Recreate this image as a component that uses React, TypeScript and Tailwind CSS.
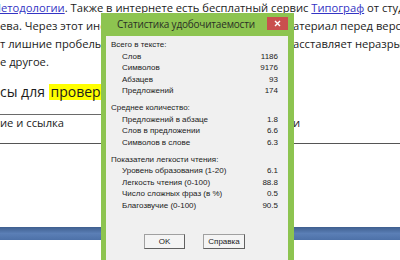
import React from "react";

const rows1 = [
  ["Слов", "1186"],
  ["Символов", "9176"],
  ["Абзацев", "93"],
  ["Предложений", "174"],
];
const rows2 = [
  ["Предложений в абзаце", "1.8"],
  ["Слов в предложении", "6.6"],
  ["Символов в слове", "6.3"],
];
const rows3 = [
  ["Уровень образования (1-20)", "6.1"],
  ["Легкость чтения (0-100)", "88.8"],
  ["Число сложных фраз (в %)", "0.5"],
  ["Благозвучие (0-100)", "90.5"],
];

function Section({ title, rows }: { title: string; rows: string[][] }) {
  return (
    <div className="flex flex-col">
      <div className="h-[11.5px] leading-[11.5px]">{title}</div>
      {rows.map(([k, v]) => (
        <div key={k} className="flex h-[11.5px] leading-[11.5px] pl-[11px]">
          <span className="flex-1">{k}</span>
          <span>{v}</span>
        </div>
      ))}
    </div>
  );
}

function Dialog() {
  return (
    <div className="absolute left-[101px] top-[13px] w-[193px] h-[252px] bg-[#8dc450] flex flex-col">
      <div className="h-[23px] flex items-center relative">
        <span className="pl-[16px] text-[10px] tracking-[-0.2px] text-[#2a2f26] font-['Open_Sans',sans-serif]">
          Статистика удобочитаемости
        </span>
        <div className="absolute right-[6px] top-[4px] w-[21px] h-[13px] bg-[#c9504e] flex items-center justify-center">
          <svg width="7" height="7" viewBox="0 0 7 7">
            <path d="M1 1L6 6M6 1L1 6" stroke="#fff" strokeWidth="1.4" />
          </svg>
        </div>
      </div>
      <div className="ml-[5px] mr-[6px] mb-[4px] flex-1 bg-[#f0f0f0] pt-[3px] pl-[5px] pr-[10px] pb-[5px] flex flex-col gap-[5.5px] text-[8px] text-[#222] font-['Liberation_Sans',sans-serif]">
        <Section title="Всего в тексте:" rows={rows1} />
        <Section title="Среднее количество:" rows={rows2} />
        <Section title="Показатели легкости чтения:" rows={rows3} />
        <div className="mt-auto flex justify-center gap-[18px] mb-[7px]">
          <button className="w-[41px] h-[15px] bg-[#f4f4f4] border border-[#a0a0a0] border-r-[#606060] border-b-[#606060] text-[8px]">
            OK
          </button>
          <button className="w-[42px] h-[15px] bg-[#f4f4f4] border border-[#a0a0a0] border-r-[#606060] border-b-[#606060] text-[8px]">
            Справка
          </button>
        </div>
      </div>
    </div>
  );
}

export default function App() {
  return (
    <div className="relative w-[400px] h-[260px] overflow-hidden bg-white text-[#1c1c1c] font-['Open_Sans',sans-serif]">
      <div className="text-[11.2px] leading-[18px] mt-[-1px]">
        <div className="whitespace-nowrap ml-[-9px]">
          <span className="text-[#3434c4] underline">Методологии</span>. Также в интернете есть бесплатный сервис{" "}
          <span className="text-[#3434c4] underline">Типограф</span> от студии Артемия Лебедева
        </div>
        <div className="flex whitespace-nowrap">
          <div className="w-[101px] shrink-0 overflow-hidden">ева. Через этот инструмент</div>
          <div className="w-[192px] shrink-0" />
          <div className="shrink-0">атериал перед версткой</div>
        </div>
        <div className="flex whitespace-nowrap">
          <div className="w-[101px] shrink-0 overflow-hidden">т лишние пробелы, расставляет</div>
          <div className="w-[192px] shrink-0" />
          <div className="shrink-0">асставляет неразрывные</div>
        </div>
        <div className="whitespace-nowrap">е другое.</div>
      </div>
      <div className="mt-[10px] text-[14px] leading-[22px] whitespace-nowrap w-[101px] overflow-hidden">
        сы для{" "}
        <span className="bg-[#ffff00] inline-block h-[16px] leading-[16px] pl-[2px]">проверки</span>
      </div>
      <div className="mt-[11px] flex text-[11.2px] whitespace-nowrap">
        <div className="w-[101px] shrink-0 border-t border-[#6a6a6a] h-[29px] leading-[16px]">ие и ссылка</div>
        <div className="w-[192px] shrink-0" />
        <div className="shrink-0 h-[29px] leading-[16px] pt-[1px]">и</div>
      </div>
      <div className="border-t border-[#555]" />
      <div className="mt-[83px] h-[13px] bg-gradient-to-b from-[#3f5f8f] via-[#5b7fb6] to-[#4d71a8]" />
      <Dialog />
    </div>
  );
}
